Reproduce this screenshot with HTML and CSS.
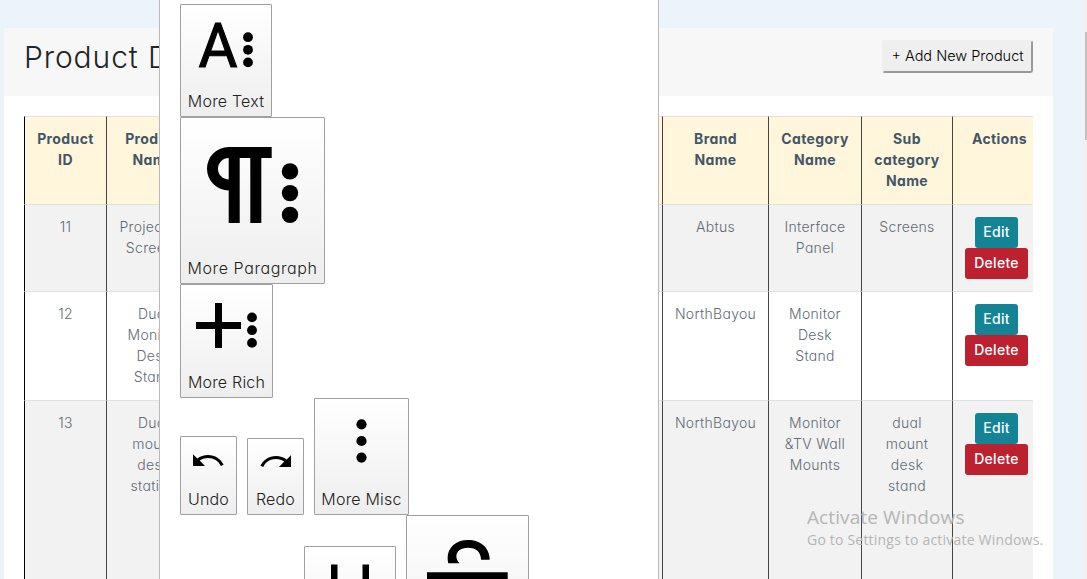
FILE: index.html
```html
<!DOCTYPE html>
<html lang="en">
<head>
<meta charset="utf-8">
<title>Product Details</title>
<link rel="stylesheet" href="styles.css">
</head>
<body>
<main class="card">
  <header class="card-header">
    <h1 class="title">Product D</h1>
    <button class="add-btn">+ Add New Product</button>
  </header>
  <div class="table-wrap">
    <table class="products">
      <colgroup><col class="c-id"><col class="c-name"><col class="c-mid"><col class="c-brand"><col class="c-cat"><col class="c-sub"><col class="c-act"></colgroup>
      <thead>
        <tr class="r-head"><th>Product<br>ID</th><th>Product<br>Name</th><th></th><th>Brand<br>Name</th><th>Category<br>Name</th><th>Sub<br>category<br>Name</th><th>Actions</th></tr>
      </thead>
      <tbody>
        <tr class="r-one"><td>11</td><td>Projection<br>Screens</td><td></td><td>Abtus</td><td>Interface<br>Panel</td><td>Screens</td><td><div class="actions"><button class="btn edit">Edit</button><button class="btn delete">Delete</button></div></td></tr>
        <tr class="r-two"><td>12</td><td>Dual<br>Monitor<br>Desk<br>Stand</td><td></td><td>NorthBayou</td><td>Monitor<br>Desk<br>Stand</td><td></td><td><div class="actions"><button class="btn edit">Edit</button><button class="btn delete">Delete</button></div></td></tr>
        <tr class="r-three"><td>13</td><td>Dual<br>mount<br>desk<br>station</td><td></td><td>NorthBayou</td><td>Monitor<br>&amp;TV Wall<br>Mounts</td><td>dual<br>mount<br>desk<br>stand</td><td><div class="actions"><button class="btn edit">Edit</button><button class="btn delete">Delete</button></div></td></tr>
      </tbody>
    </table>
  </div>
</main>

<section class="modal">
  <button class="tool t-text">
    <svg viewBox="0 0 90 84"><text class="letter" x="37" y="62" text-anchor="middle" textLength="39" lengthAdjust="spacingAndGlyphs">A</text><circle cx="67" cy="32.2" r="4.9"/><circle cx="67" cy="44.8" r="4.9"/><circle cx="67" cy="57.4" r="4.9"/></svg>
    <span>More Text</span>
  </button>
  <button class="tool t-para">
    <svg viewBox="0 0 143 138"><path d="M90.7 29H47.7a21.7 21.7 0 0 0 0 43.4V105h11V40h10.6v65h11V40h10.4zM47.7 40v21.5a10.75 10.75 0 0 1 0-21.5z"/><circle cx="109" cy="53.4" r="8.2"/><circle cx="109" cy="75.1" r="8.2"/><circle cx="109" cy="96.9" r="8.2"/></svg>
    <span>More Paragraph</span>
  </button>
  <button class="tool t-rich">
    <svg viewBox="0 0 91 85"><path d="M34 18h7v19h19v7H41v19h-7V44H15v-7h19z"/><circle cx="71" cy="32.4" r="4.9"/><circle cx="71" cy="45.2" r="4.9"/><circle cx="71" cy="57.9" r="4.9"/></svg>
    <span>More Rich</span>
  </button>
  <div class="row">
    <button class="tool t-undo">
      <svg viewBox="0 0 55 50"><path d="M12 17.300l4.300 4.300C19 19.200 23 18 27 18c7 0 13 4 15.600 9.700l-2.800 1.200C37.500 24 32.700 21 27 21c-3.200 0-6 .9-8.300 2.600L24 29H12z"/></svg>
      <span>Undo</span>
    </button>
    <button class="tool t-redo">
      <svg viewBox="0 0 55 48"><path d="M43 16.300l-4.300 4.300C36 18.200 32 17 28 17c-7 0-13 4-15.600 9.700l2.800 1.200C17.500 23 22.300 20 28 20c3.200 0 6 .9 8.300 2.600L31 28H43z"/></svg>
      <span>Redo</span>
    </button>
    <button class="tool t-misc">
      <svg viewBox="0 0 93 88"><circle cx="46.500" cy="25.300" r="5.100"/><circle cx="46.500" cy="42" r="5.100"/><circle cx="46.500" cy="58.600" r="5.100"/></svg>
      <span>More Misc</span>
    </button>
  </div>
  <div class="row row-next">
    <button class="tool t-under" aria-label="Underline">
      <svg viewBox="0 0 90 84"><path d="M26 17.500h6.500V40a12.500 12.500 0 0 0 25 0V17.500H64V40a19 19 0 0 1-38 0z"/></svg>
    </button>
    <button class="tool t-strike" aria-label="Strikethrough">
      <svg viewBox="0 0 121 120"><path d="M41.300 47.300C38 34 47 24 61 24c13 0 21.700 8 21.700 19.700H74C74 36 69 31.700 61 31.700 50 31.700 46 40 52.500 47.300zM20 56.300h80.700V66H20z"/></svg>
    </button>
  </div>
</section>

<aside class="watermark"><p class="wm-title">Activate Windows</p><p class="wm-sub">Go to Settings to activate Windows.</p></aside>
<div class="scrollbar"><div class="thumb"></div></div>
</body>
</html>
```

FILE: styles.css
```css
* { box-sizing: border-box; }
html, body { height: 579px; overflow: hidden; }
body {
  margin: 0;
  padding: 28px 34px 0 4px;
  background: #ebf4f8;
  font-family: Inter, "Open Sans", sans-serif;
  font-feature-settings: "cv11";
}
button { font: inherit; font-feature-settings: inherit; white-space: nowrap; }

.card { height: 551px; overflow: hidden; background: #fff; }
.card-header {
  display: flex;
  justify-content: space-between;
  align-items: flex-start;
  height: 68px;
  padding: 12px 20px 0;
  background: #f7f7f7;
}
.title { margin: 0; font-size: 30px; line-height: 35px; letter-spacing: 0.9px; font-weight: 300; color: #212529; white-space: nowrap; }
.add-btn {
  width: 151px;
  height: 33px;
  padding: 0 0 2px;
  border: 2px solid;
  border-color: #efefef #999 #999 #efefef;
  border-radius: 3px;
  background: #efefef;
  color: #000;
  font-size: 14.5px;
  font-weight: 350;
}

.table-wrap { padding: 20px 0 0; margin: 0 20px; overflow: hidden; }
.products { width: 1022px; table-layout: fixed; border-collapse: separate; border-spacing: 0; }
.c-id { width: 82px; }
.c-name { width: 94px; }
.c-mid { width: 462px; }
.c-brand { width: 106px; }
.c-cat { width: 93px; }
.c-sub { width: 91px; }
.c-act { width: 94px; }
.products th, .products td {
  padding: 11px 0 0;
  border-top: 1px solid #dee2e6;
  border-left: 1px solid #454545;
  vertical-align: top;
  text-align: center;
  font-size: 14px;
  line-height: 21px;
  letter-spacing: 0.3px;
}
.products th:first-child, .products td:first-child { border-left-color: #000; }
.products th { background: #fff6db; color: #42566b; font-weight: 700; letter-spacing: 0.4px; }
.products td { color: #616b76; font-weight: 300; }
.r-head { height: 88px; }
.r-one { height: 87px; }
.r-two { height: 109px; }
.r-three { height: 220px; }
.r-one td, .r-three td { background: #f2f2f2; }

.actions { display: flex; flex-direction: column; align-items: center; width: 63px; margin: 1px 0 0 12px; }
.btn { height: 31px; padding: 0 0 2px; border: 0; border-radius: 3px; color: #fff; font-size: 14px; font-weight: 500; line-height: 21px; letter-spacing: 0.3px; }
.edit { width: 43px; background: #138496; }
.delete { width: 63px; background: #bd2130; }

.modal {
  position: absolute;
  left: 159px;
  top: 0;
  width: 500px;
  height: 579px;
  padding: 4px 20px 0;
  overflow: hidden;
  background: #fff;
  border: solid #b9b9b9;
  border-width: 0 1px;
}
.tool {
  display: flex;
  flex-direction: column;
  align-items: center;
  flex: none;
  padding: 0;
  border: 1px solid #a0a0a0;
  border-radius: 1px;
  background: linear-gradient(#fff, #eee);
  color: #222;
}
.tool svg { display: block; width: 100%; flex: 1; min-height: 0; fill: #000; }
.tool span { height: 27px; font-size: 16px; line-height: 24px; font-weight: 300; letter-spacing: 0.2px; }
.letter { font: 400 61px Roboto, sans-serif; stroke: #000; stroke-width: 1.1px; }
.t-text { width: 92px; height: 113px; }
.t-para { width: 145px; height: 167px; }
.t-para span { letter-spacing: 0.6px; }
.t-rich { width: 93px; height: 114px; }
.t-undo { width: 57px; height: 79px; }
.t-redo { width: 57px; height: 77px; }
.t-misc { width: 95px; height: 117px; }
.t-under { width: 92px; height: 113px; }
.t-strike { width: 123px; height: 149px; }
.t-under, .t-strike { padding-bottom: 27px; }
.row { display: flex; gap: 10px; align-items: flex-end; }
.row-next { align-items: flex-start; padding-left: 124px; }
.t-under { margin-top: 31px; }

.watermark { position: absolute; left: 807px; top: 504px; font-family: "Open Sans", "Noto Sans", sans-serif; color: #b5b5b5; white-space: nowrap; }
.watermark p { margin: 0; }
.wm-title { font-size: 19px; line-height: 26px; letter-spacing: 0.1px; }
.wm-sub { font-size: 14px; line-height: 20px; letter-spacing: 0.2px; }

.scrollbar { position: absolute; top: 0; right: 0; width: 4px; height: 579px; padding: 32px 0 0 2px; background: #f1f1f1; }
.thumb { height: 108px; background: #c1c1c1; }
```
